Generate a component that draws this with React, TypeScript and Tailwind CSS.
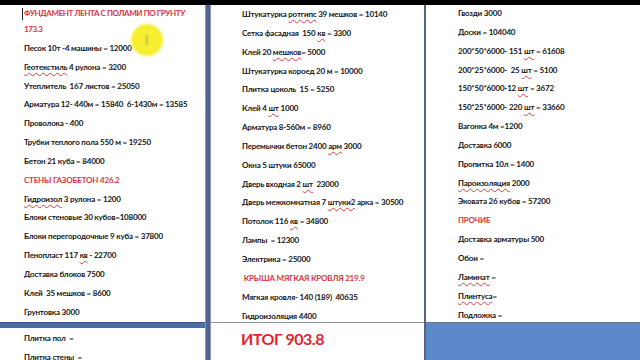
import type { ReactNode } from 'react'

type Line = { text: string; red?: boolean }

const FONT = { fontFamily: 'Lato, "Open Sans", "Liberation Sans", sans-serif' }

const col1: Line[] = [
  { text: 'Песок 10т -4 машины = 12000' },
  { text: '~Геотекстиль~ 4 рулона = 3200' },
  { text: 'Утеплитель  167 листов = 25050' },
  { text: 'Арматура 12- 440м = 15840  6-1430м = 13585' },
  { text: 'Проволока - 400' },
  { text: 'Трубки теплого пола 550 м = 19250' },
  { text: 'Бетон 21 куба = 84000' },
  { text: 'СТЕНЫ ГАЗОБЕТОН 426.2', red: true },
  { text: '~Гидроизол~ 3 рулона = 1200' },
  { text: 'Блоки стеновые 30 кубов=108000' },
  { text: 'Блоки перегородочные 9 куба = 37800' },
  { text: 'Пенопласт 117 ~кв~ - 22700' },
  { text: 'Доставка блоков 7500' },
  { text: 'Клей  35 мешков = 8600' },
  { text: 'Грунтовка 3000' },
]

const col2: Line[] = [
  { text: 'Штукатурка ~ротгипс~ 39 мешков = 10140' },
  { text: 'Сетка фасадная  150 ~кв~ = 3300' },
  { text: 'Клей 20 ~мешков~= 5000' },
  { text: 'Штукатурка короед 20 м = 10000' },
  { text: 'Плитка цоколь  15 = 5250' },
  { text: 'Клей 4 ~шт~ 1000' },
  { text: 'Арматура 8-560м = 8960' },
  { text: 'Перемычки бетон 2400 ~арм~ 3000' },
  { text: 'Окна 5 штуки 65000' },
  { text: 'Дверь входная 2 ~шт~  23000' },
  { text: 'Дверь межкомнатная 7 ~штуки2~ арка = 30500' },
  { text: 'Потолок 116 ~кв~ = 34800' },
  { text: 'Лампы  = 12300' },
  { text: 'Электрика = 25000' },
  { text: ' КРЫША МЯГКАЯ КРОВЛЯ 219.9', red: true },
  { text: 'Мягкая кровля- 140 (189)  40635' },
  { text: 'Гидроизоляция 4400' },
]

const col3: Line[] = [
  { text: 'Гвозди 3000' },
  { text: 'Доски = 104040' },
  { text: '200*50*6000- 151 ~шт~ = 61608' },
  { text: '200*25*6000-  25 ~шт~ = 5100' },
  { text: '150*50*6000-12 ~шт~ = 3672' },
  { text: '150*25*6000- 220 ~шт~ = 33660' },
  { text: 'Вагонка 4м =1200' },
  { text: 'Доставка 6000' },
  { text: 'Пропитка 10л = 1400' },
  { text: '~Пароизоляция~ 2000' },
  { text: 'Эковата 26 кубов = 57200' },
  { text: 'ПРОЧИЕ', red: true },
  { text: 'Доставка арматуры 500' },
  { text: 'Обои =' },
  { text: '~Ламинат~ =' },
  { text: '~Плинтуса~=' },
  { text: 'Подложка =' },
]

// ~слово~ -> подчёркнуто проверкой орфографии
function Spell({ text }: { text: string }) {
  const parts = text.split('~')
  return (
    <>
      {parts.map((p, i) =>
        i % 2 === 1 ? (
          <span
            key={i}
            className="underline decoration-wavy decoration-[#d84040] decoration-[0.5px] underline-offset-[2px]"
          >
            {p}
          </span>
        ) : (
          <span key={i}>{p}</span>
        ),
      )}
    </>
  )
}

function Para({ line }: { line: Line }) {
  return (
    <div
      className={`whitespace-pre text-[8px] font-bold leading-[16px] tracking-[-0.2px] ${
        line.red ? 'text-[#d8343e]' : 'text-[#161616]'
      }`}
    >
      <Spell text={line.text} />
    </div>
  )
}

function Page({ children, className }: { children: ReactNode; className?: string }) {
  return <div className={`flex flex-col gap-[2.85px] bg-white ${className ?? ''}`}>{children}</div>
}

export default function App() {
  return (
    <div className="flex h-[360px] w-[640px] flex-col overflow-hidden bg-[#5b88c8]" style={FONT}>
      <div className="h-[5px] shrink-0 bg-black" />
      <div className="flex flex-1">
        {/* колонка 1 */}
        <div className="flex w-[205px] shrink-0 flex-col">
          <Page className="relative h-[317px] pl-[24px]">
            <div className="absolute left-[22px] top-[3px] h-[12px] w-px bg-[#222]" />
            <div className="whitespace-pre text-[8px] font-bold leading-[16px] tracking-[-0.4px] text-[#d8343e]">
              ФУНДАМЕНТ ЛЕНТА С ПОЛАМИ ПО ГРУНТУ
              <br />
              173.3
            </div>
            {col1.map((l, i) => (
              <Para key={i} line={l} />
            ))}
            <div className="absolute left-[131px] top-[19px] flex h-[32px] w-[32px] items-center justify-center rounded-full bg-[#f6ef30] blur-[1px]">
              <span className="text-[13px] font-light leading-none text-[#555]">I</span>
            </div>
          </Page>
          <div className="h-[6px] shrink-0 border-t border-[#3a5688] bg-[#4b6ea8]" />
          <Page className="flex-1 pl-[24px] pt-[2px]">
            <Para line={{ text: 'Плитка пол  =' }} />
            <Para line={{ text: 'Плитка стены  =' }} />
          </Page>
        </div>

        <div className="w-[6px] shrink-0 border-x border-[#8a96b0] bg-[#50648e]" />

        {/* колонка 2 */}
        <div className="flex w-[213px] shrink-0 flex-col">
          <Page className="h-[317px] pl-[31px] pt-[1px]">
            {col2.map((l, i) => (
              <Para key={i} line={l} />
            ))}
          </Page>
          <div className="h-px shrink-0 bg-[#8d96a8]" />
          <div className="flex-1 bg-white pl-[30px] pt-[4px]">
            <div className="text-[16px] font-bold leading-[24px] tracking-[-0.5px] text-[#e3242b]">ИТОГ 903.8</div>
          </div>
        </div>

        <div className="w-[2px] shrink-0 bg-[#56647f]" />

        {/* колонка 3 */}
        <div className="flex flex-1 flex-col">
          <Page className="h-[317px] pl-[32px]">
            {col3.map((l, i) => (
              <Para key={i} line={l} />
            ))}
          </Page>
          <div className="h-px shrink-0 bg-[#6a7488]" />
        </div>
      </div>
    </div>
  )
}
